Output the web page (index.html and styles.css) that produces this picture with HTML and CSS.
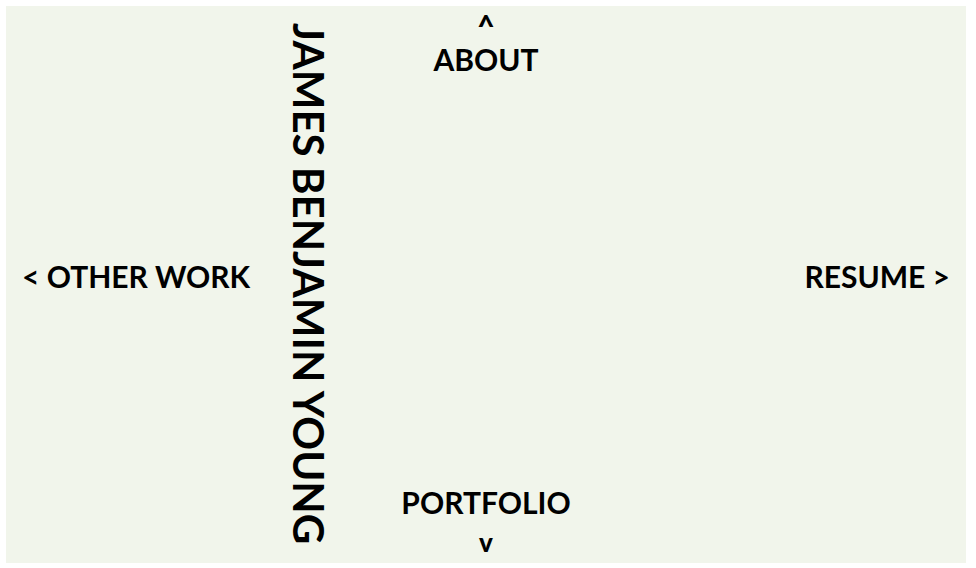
FILE: index.html
```html
<!DOCTYPE html>
<html lang="en">
<head>
<meta charset="utf-8">
<title>James Benjamin Young</title>
<link rel="stylesheet" href="styles.css">
</head>
<body>
<main class="page">
  <a class="link about" href="#about"><span class="tip">^</span><span>ABOUT</span></a>
  <a class="link other" href="#other">&lt; OTHER WORK</a>
  <h1 class="name">JAMES BENJAMIN YOUNG</h1>
  <a class="link resume" href="#resume">RESUME &gt;</a>
  <a class="link portfolio" href="#portfolio"><span>PORTFOLIO</span><span class="tip down">v</span></a>
</main>
</body>
</html>
```
FILE: styles.css
```css
* { box-sizing: border-box; }
body { margin: 0; padding: 6px 10px 5px 6px; background: #fff; }
.page {
  min-height: calc(100vh - 11px);
  padding: 2px 16px 4px;
  display: grid;
  grid-template-columns: 1fr auto 1fr;
  grid-template-rows: auto 1fr auto;
  background: #f1f5eb;
  color: #000;
  font-family: Lato, "Liberation Sans", sans-serif;
}
.link {
  color: inherit;
  font-size: 30px;
  line-height: 34px;
  font-weight: 700;
  text-decoration: none;
}
.about, .portfolio { grid-column: 2; display: flex; flex-direction: column; align-items: center; }
.about { grid-row: 1; }
.portfolio { grid-row: 3; gap: 6px; }
.other, .resume { grid-row: 1 / 4; padding-bottom: 16px; }
.other { grid-column: 1; place-self: center start; }
.resume { grid-column: 3; place-self: center end; }
.name {
  grid-column: 1;
  grid-row: 1 / 4;
  place-self: center end;
  margin: 0 68px 0 0;
  writing-mode: vertical-rl;
  font-size: 42px;
  line-height: 48px;
  font-weight: 700;
  white-space: nowrap;
}
.tip { font-weight: 900; }
.down { font-size: 26px; }
```
